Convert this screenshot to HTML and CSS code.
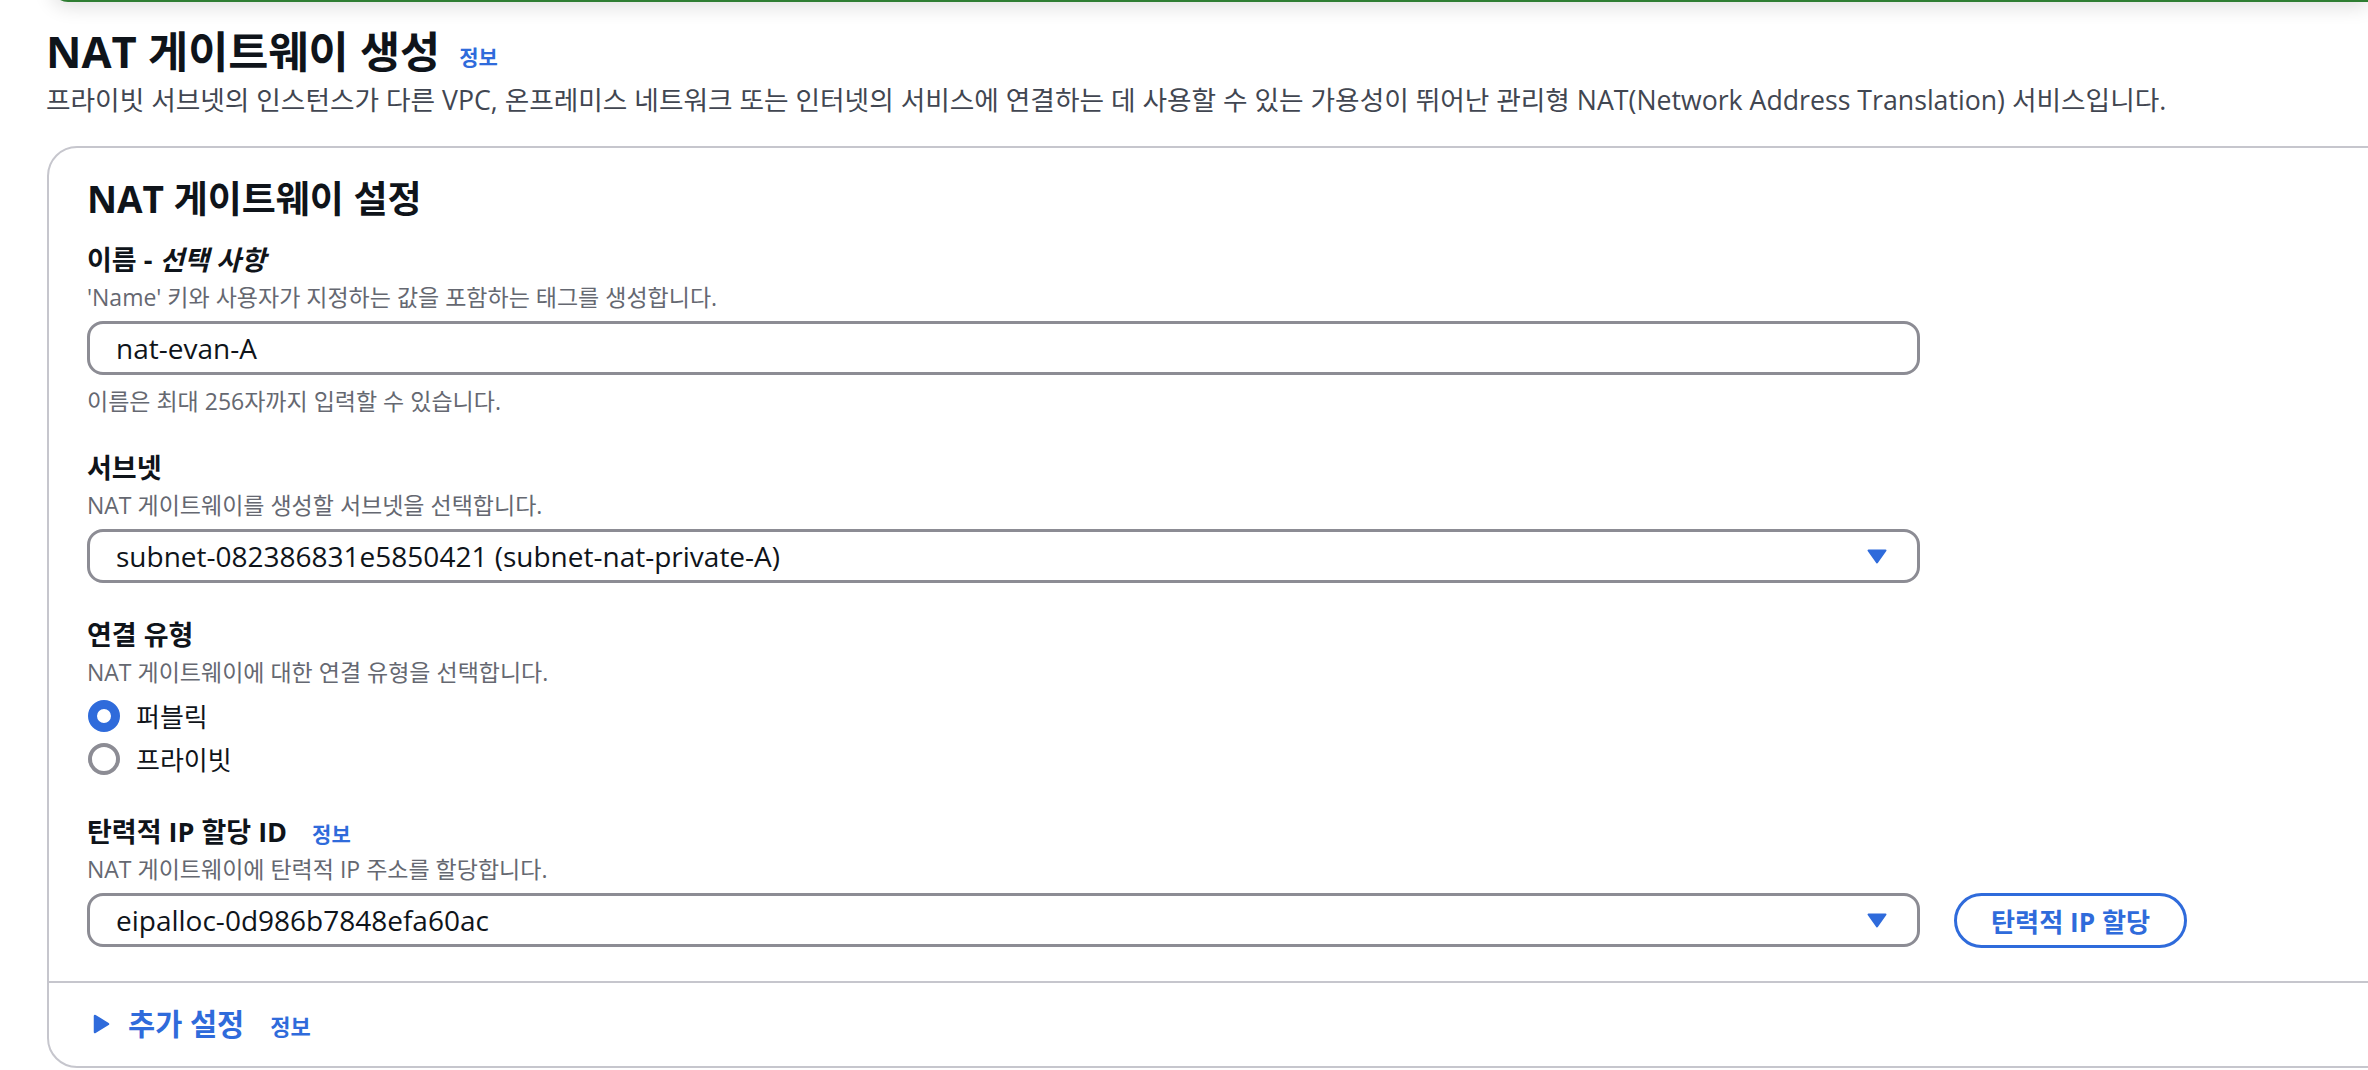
FILE: index.html
```html
<!DOCTYPE html>
<html lang="ko">
<head>
<meta charset="utf-8">
<title>NAT 게이트웨이 생성</title>
<link rel="stylesheet" href="styles.css">
</head>
<body>
<div class="flash"></div>
<main class="page">
  <header class="page-header">
    <h1 class="title">NAT 게이트웨이 생성<a class="info info-title">정보</a></h1>
    <p class="page-desc">프라이빗 서브넷의 인스턴스가 다른 VPC, 온프레미스 네트워크 또는 인터넷의 서비스에 연결하는 데 사용할 수 있는 가용성이 뛰어난 관리형 NAT(Network Address Translation) 서비스입니다.</p>
  </header>
  <section class="card">
    <div class="card-body">
      <h2 class="card-title">NAT 게이트웨이 설정</h2>

      <div class="field field-first">
        <div class="label">이름 - <i>선택 사항</i></div>
        <div class="desc">'Name' 키와 사용자가 지정하는 값을 포함하는 태그를 생성합니다.</div>
        <div class="control">nat-evan-A</div>
        <div class="constraint">이름은 최대 256자까지 입력할 수 있습니다.</div>
      </div>

      <div class="field">
        <div class="label">서브넷</div>
        <div class="desc">NAT 게이트웨이를 생성할 서브넷을 선택합니다.</div>
        <div class="control select">
          <span>subnet-082386831e5850421 (subnet-nat-private-A)</span>
          <svg class="arrow" width="20" height="15" viewBox="0 0 20 15"><path d="M1.5 1.5 H18.5 L10 13.5 Z" fill="#2f6bdb" stroke="#2f6bdb" stroke-width="2" stroke-linejoin="round"/></svg>
        </div>
      </div>

      <div class="field">
        <div class="label">연결 유형</div>
        <div class="desc">NAT 게이트웨이에 대한 연결 유형을 선택합니다.</div>
        <div class="radios">
          <div class="radio"><span class="dot checked"></span><span>퍼블릭</span></div>
          <div class="radio"><span class="dot"></span><span>프라이빗</span></div>
        </div>
      </div>

      <div class="field">
        <div class="label">탄력적 IP 할당 ID<a class="info info-label">정보</a></div>
        <div class="desc">NAT 게이트웨이에 탄력적 IP 주소를 할당합니다.</div>
        <div class="control-row">
          <div class="control select">
            <span>eipalloc-0d986b7848efa60ac</span>
            <svg class="arrow" width="20" height="15" viewBox="0 0 20 15"><path d="M1.5 1.5 H18.5 L10 13.5 Z" fill="#2f6bdb" stroke="#2f6bdb" stroke-width="2" stroke-linejoin="round"/></svg>
          </div>
          <div class="btn">탄력적 IP 할당</div>
        </div>
      </div>
    </div>
    <div class="card-footer">
      <svg class="caret" width="17" height="20" viewBox="0 0 17 20"><path d="M2 2 L15 10 L2 18 Z" fill="#2f6bdb" stroke="#2f6bdb" stroke-width="2.5" stroke-linejoin="round"/></svg>
      <span class="expand-title">추가 설정</span>
      <a class="info info-footer">정보</a>
    </div>
  </section>
</main>
</body>
</html>
```
FILE: styles.css
```css
html, body {
  margin: 0;
  padding: 0;
  background: #ffffff;
}

body {
  width: 2368px;
  height: 1070px;
  overflow: hidden;
  font-family: "Open Sans", "Noto Sans CJK KR", sans-serif;
  color: #0f141a;
}

.flash {
  height: 24px;
  margin-top: -22px;
  margin-left: 52px;
  background: #2e7d32;
  border-bottom-left-radius: 16px;
  box-shadow: 0 4px 20px rgba(0, 0, 0, 0.14);
}

.page {
  padding-left: 47px;
  margin-right: -40px;
}

.page-header {
  margin-left: -1px;
}

.title {
  margin: 24px 0 0;
  font-size: 43.6px;
  line-height: 50px;
  font-weight: 700;
  color: #0f141a;
}

.info {
  color: #2f6bdb;
  font-weight: 700;
  font-size: 21px;
  line-height: 1;
  text-decoration: none;
}

.info-title {
  margin-left: 19px;
  vertical-align: 3px;
}

.info-label {
  margin-left: 25px;
}

.page-desc {
  margin: 7px 0 0;
  font-size: 26.7px;
  line-height: 34px;
  color: #414651;
}

.card {
  margin-top: 29px;
  border: 2px solid #c6c6cd;
  border-radius: 30px;
}

.card-body {
  padding: 29px 0 33px 38px;
  border-bottom: 2px solid #c6c6cd;
}

.card-title {
  margin: 0;
  font-size: 37px;
  line-height: 44px;
  font-weight: 700;
}

.field {
  margin-top: 34px;
}

.field-first {
  margin-top: 21px;
}

.label {
  font-size: 27px;
  line-height: 36px;
  font-weight: 700;
}

.label i {
  font-style: italic;
}

.desc {
  font-size: 23px;
  line-height: 38px;
  color: #656871;
}

.control {
  margin-top: 5px;
  width: 1833px;
  height: 54px;
  box-sizing: border-box;
  border: 3px solid #8c8c94;
  border-radius: 16px;
  padding: 0 30px 0 26px;
  display: flex;
  align-items: center;
  font-size: 28px;
  color: #0f141a;
  white-space: nowrap;
}

.select {
  justify-content: space-between;
}

.arrow {
  flex: none;
}

.constraint {
  margin-top: 11px;
  font-size: 23px;
  line-height: 30px;
  color: #656871;
}

.radios {
  margin-top: 3px;
}

.radio {
  display: flex;
  align-items: center;
  height: 43px;
  font-size: 26px;
}

.dot {
  width: 32px;
  height: 32px;
  box-sizing: border-box;
  border-radius: 50%;
  border: 4px solid #8c8c94;
  margin: 0 16px 0 1px;
  background: #ffffff;
}

.dot.checked {
  border: 9px solid #2f6bdb;
}

.control-row {
  display: flex;
  align-items: flex-start;
  gap: 34px;
  margin-top: 5px;
}

.control-row .control {
  margin-top: 0;
}

.btn {
  height: 55px;
  box-sizing: border-box;
  border: 3px solid #2f6bdb;
  border-radius: 28px;
  padding: 0 34px;
  display: flex;
  align-items: center;
  color: #2f6bdb;
  font-weight: 700;
  font-size: 26.2px;
  white-space: nowrap;
}

.card-footer {
  display: flex;
  align-items: baseline;
  padding: 21px 0 22px 44px;
}

.caret {
  align-self: center;
  margin-right: 18px;
}

.expand-title {
  font-size: 29.5px;
  line-height: 40px;
  font-weight: 700;
  color: #2f6bdb;
}

.info-footer {
  margin-left: 26px;
  font-size: 22px;
}
```
